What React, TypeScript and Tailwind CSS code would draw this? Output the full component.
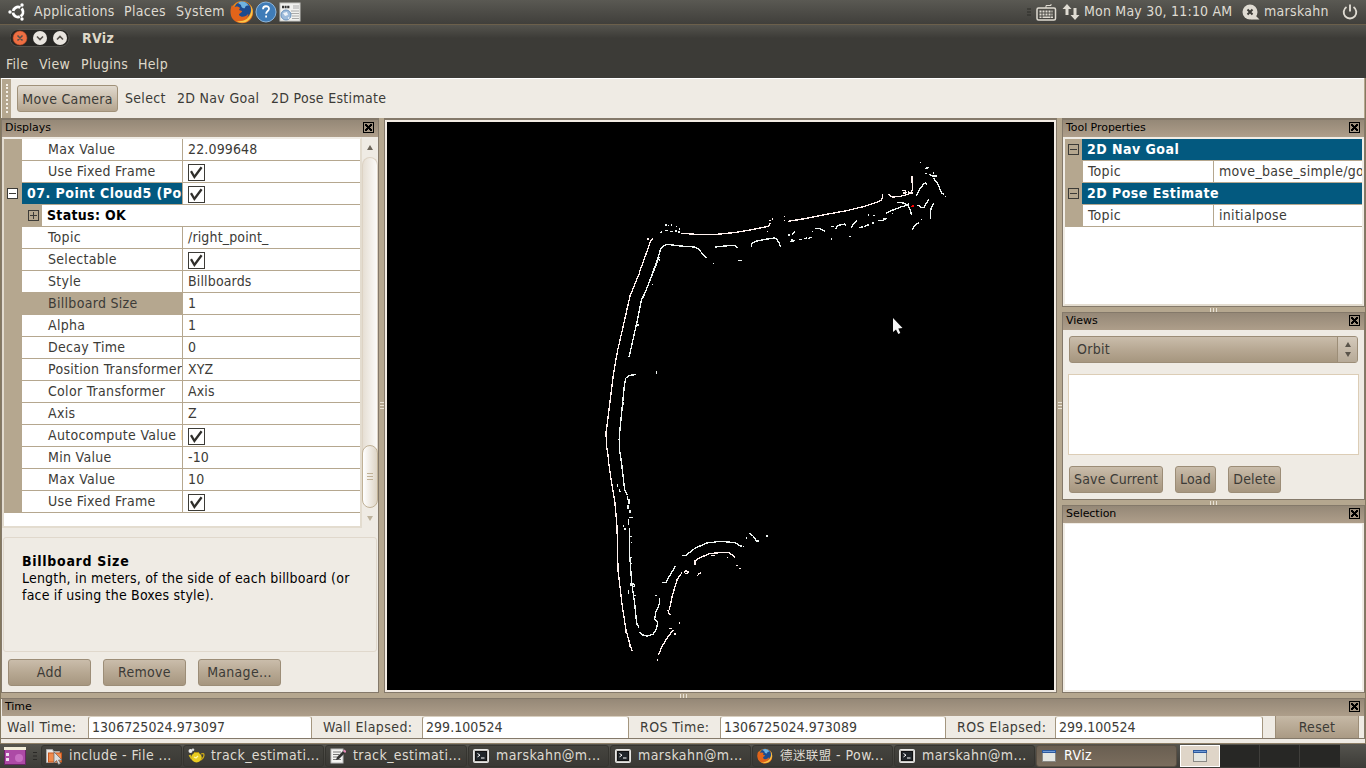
import type { ReactNode } from "react";

const BTN =
  "flex items-center justify-center rounded-[3px] border border-[#9c8d77] bg-linear-to-b from-[#cabdab] via-[#b7a893] to-[#a6967f]";

function CloseBox() {
  return (
    <svg className="mb-[2px]" width="11" height="11" viewBox="0 0 11 11" shapeRendering="crispEdges">
      <rect x="0.5" y="0.5" width="10" height="10" rx="1" fill="none" stroke="#000" />
      <path d="M2 2h2v1h1v1h1v-1h1v-1h2v2h-1v1h-1v1h1v1h1v2h-2v-1h-1v-1h-1v1h-1v1h-2v-2h1v-1h1v-1h-1v-1h-1z" fill="#000" />
    </svg>
  );
}

function DockTitle({ title, close = true }: { title: string; close?: boolean }) {
  return (
    <div className="flex h-[17px] shrink-0 items-center justify-between bg-linear-to-b from-[#958877] to-[#ae9e8a] pr-[4px] pl-[3px] font-['DejaVu_Sans',sans-serif] text-[11px] leading-[15px] tracking-[-0.05px] text-black">
      <span className="pb-[2px]">{title}</span>
      {close && <CloseBox />}
    </div>
  );
}

function Check() {
  return (
    <svg className="mt-px" width="17" height="17" viewBox="0 0 17 17">
      <rect x="0.5" y="0.5" width="16" height="16" fill="#fff" stroke="#3c3b37" shapeRendering="crispEdges" />
      <path d="M3 7.2l3.4 5.8L13.6 3.2" fill="none" stroke="#2f2e2b" strokeWidth="2.3" />
    </svg>
  );
}

function Expander({ open, white }: { open: boolean; white?: boolean }) {
  return (
    <svg className="mb-[2px]" width="11" height="11" viewBox="0 0 11 11" shapeRendering="crispEdges">
      <rect x="0.5" y="0.5" width="10" height="10" fill={white ? "#fff" : "none"} stroke="#3c3b37" />
      <path d={open ? "M2 5.5h7" : "M2 5.5h7M5.5 2v7"} stroke="#3c3b37" />
    </svg>
  );
}

function Splitter({ vertical = false, marks = true }: { vertical?: boolean; marks?: boolean }) {
  return (
    <div className={`flex shrink-0 items-center justify-center gap-[2px] ${vertical ? "w-[5px] flex-col" : "h-[5px] w-full"}`}>
      {marks &&
        [0, 1, 2].map((i) => (
          <span key={i} className={vertical ? "h-px w-[4px] bg-[#e9e2d6]" : "h-[4px] w-px bg-[#e9e2d6]"} />
        ))}
    </div>
  );
}

const rows: { name: string; value: string | true; selected?: boolean; kind?: "head" | "status" }[] = [
  { name: "Max Value", value: "22.099648" },
  { name: "Use Fixed Frame", value: true },
  { name: "07. Point Cloud5 (Po", value: true, kind: "head" },
  { name: "Status: OK", value: "", kind: "status" },
  { name: "Topic", value: "/right_point_" },
  { name: "Selectable", value: true },
  { name: "Style", value: "Billboards" },
  { name: "Billboard Size", value: "1", selected: true },
  { name: "Alpha", value: "1" },
  { name: "Decay Time", value: "0" },
  { name: "Position Transformer", value: "XYZ" },
  { name: "Color Transformer", value: "Axis" },
  { name: "Axis", value: "Z" },
  { name: "Autocompute Value B", value: true },
  { name: "Min Value", value: "-10" },
  { name: "Max Value", value: "10" },
  { name: "Use Fixed Frame", value: true },
];

function PropertyRow({ row }: { row: (typeof rows)[number] }) {
  if (row.kind === "status") {
    return (
      <div className="flex h-[22px] bg-[#b5a78f]">
        <div className="flex w-[38px] items-center justify-end pr-[3px]"><Expander open={false} /></div>
        <div className="flex-1 border-b border-[#b5a78f] bg-white pl-[5px] font-bold leading-[20px] tracking-[0.3px] text-black">{row.name}</div>
      </div>
    );
  }
  const nameStyle =
    row.kind === "head"
      ? "bg-[#03597f] pl-[5px] font-bold text-white tracking-[0.47px]"
      : row.selected
        ? "bg-[#b5a78f] pl-[26px]"
        : "bg-white pl-[26px]";
  return (
    <div className="flex h-[22px] bg-[#b5a78f]">
      <div className="flex w-[18px] items-center pl-[3px]">{row.kind === "head" && <Expander open white />}</div>
      <div className={`w-[160px] overflow-hidden border-b border-[#b5a78f] leading-[20px] whitespace-nowrap ${nameStyle}`}>{row.name}</div>
      <div className="flex-1 border-b border-l border-[#b5a78f] bg-white pl-[5px] leading-[20px] tracking-[0.15px]">
        {row.value === true ? <div className="pt-[2px]"><Check /></div> : row.value}
      </div>
    </div>
  );
}

function ToolHead({ name }: { name: string }) {
  return (
    <div className="flex h-[22px] bg-[#b5a78f]">
      <div className="flex w-[17px] items-center pl-[3px]"><Expander open /></div>
      <div className="flex-1 border-b border-[#b5a78f] bg-[#03597f] pl-[5px] font-bold leading-[20px] tracking-[0.47px] text-white">{name}</div>
    </div>
  );
}

function ToolRow({ value }: { value: string }) {
  return (
    <div className="flex h-[22px] bg-[#b5a78f]">
      <div className="w-[18px] shrink-0" />
      <div className="w-[130px] shrink-0 border-b border-[#b5a78f] bg-white pl-[5px] leading-[20px]">Topic</div>
      <div className="min-w-0 flex-1 overflow-hidden border-b border-l border-[#b5a78f] bg-white pl-[5px] leading-[20px] whitespace-nowrap">{value}</div>
    </div>
  );
}

function Firefox({ size }: { size: number }) {
  return (
    <svg width={size} height={size} viewBox="0 0 24 24">
      <circle cx="12" cy="12" r="11" fill="#e8861b" />
      <circle cx="12.5" cy="10" r="8.6" fill="#1d4b8e" />
      <path d="M8 3c4-3 9-1 11 3-2-1-4 0-4 2-2 1-4-1-4-3z" fill="#6fb3e0" />
      <path d="M2 5c0 0 1 2 3 2 2-1 4 0 5 1l-1 2 3 1c0 2-3 2-3 4 2 3 7 2 9-1 1 0 0 3-2 4 5-1 6-5 5-11 3 5 2 10-1 13-5 5-14 4-18-2-2-4-2-9 0-13z" fill="#e2641a" />
      <path d="M20.500 5c4 6 2 13-3 16-3 2-8 2-11 0 7 1 12-2 14-7 1-3 1-6 0-9z" fill="#f8c84a" />
    </svg>
  );
}

function Terminal() {
  return (
    <svg width="16" height="16" viewBox="0 0 16 16">
      <rect x="0.5" y="1.500" width="15" height="13" rx="1" fill="#c9c9c5" stroke="#e6e6e4" />
      <rect x="2.500" y="3.500" width="11" height="9" fill="#20262a" stroke="#111" />
      <path d="M4.500 5.500l2.500 1.700-2.500 1.700M8 10h3.500" fill="none" stroke="#fff" />
    </svg>
  );
}

function WindowIcon() {
  return (
    <svg width="14" height="12" viewBox="0 0 14 12">
      <rect x="0.5" y="0.5" width="13" height="11" fill="#e4e6e2" stroke="#8a8a86" />
      <rect width="14" height="3" fill="#2d5a9e" />
      <rect x="1" y="1" width="12" height="1" fill="#6f9bd6" />
    </svg>
  );
}

function FolderIcon() {
  return (
    <svg width="17" height="17" viewBox="0 0 17 17">
      <path d="M0.500 1.500h6l1 2h6v11H.5z" fill="#e8e6e3" stroke="#aaa" />
      <rect x="2.500" y="5" width="13" height="9" fill="#f08a4b" stroke="#c8571f" />
      <path d="M8 4v11l2.500-2.500 2 4 2-1-2-3.500h3.500z" fill="#ddd" stroke="#666" strokeWidth="0.7" />
    </svg>
  );
}

function TeapotIcon() {
  return (
    <svg width="17" height="16" viewBox="0 0 17 16">
      <ellipse cx="8.500" cy="9.500" rx="5.200" ry="5" fill="#e9cc21" />
      <path d="M13 6c4-2 4 3 0 6" fill="none" stroke="#c9a717" strokeWidth="1.300" />
      <path d="M4 11L1.500 7" stroke="#d9bc1e" strokeWidth="2" />
      <path d="M6 4.500h5" stroke="#b08f10" />
      <circle cx="2.500" cy="3" r="2" fill="#eee" />
      <circle cx="5" cy="1.800" r="1.300" fill="#ddd" />
      <path d="M6 9l2 1 2-2" fill="none" stroke="#fff6a8" strokeWidth="1.300" />
    </svg>
  );
}

function EditorIcon() {
  return (
    <svg width="16" height="16" viewBox="0 0 16 16">
      <rect x="1" y="1" width="12" height="14" fill="#f4f4f2" stroke="#bbb" />
      <path d="M3 4h8M3 6.500h6M3 9h4M3 11.500h8" stroke="#777" />
      <path d="M6 12l1-3 6-6 2 2-6 6z" fill="#333" />
      <path d="M13 3l1.500-1.500 2 2L15 5z" fill="#e58ab8" />
    </svg>
  );
}

function Task({ icon, children, active, width = "w-[141px]" }: { icon: ReactNode; children: ReactNode; active?: boolean; width?: string }) {
  return (
    <div
      className={`flex h-[22px] shrink-0 items-center rounded-[3px] border pl-[4px] whitespace-nowrap ${width} ${
        active ? "border-[#5a5044] bg-linear-to-b from-[#6a5f52] to-[#7a6d5d] text-white" : "border-[#35342f] bg-linear-to-b from-[#45443f] to-[#3a3935]"
      }`}
    >
      <span className="flex w-[23px] shrink-0 items-center">{icon}</span>
      <span className="pb-[2px] leading-[16px] tracking-[0.42px]">{children}</span>
    </div>
  );
}

function PointCloud() {
  return (
    <svg width="667" height="568" viewBox="387 122 667 568" className="block bg-black" shapeRendering="crispEdges">
      <g fill="none" stroke="#eef4f2" strokeWidth="4">
        <g transform="translate(640 150) scale(.33333)">
          <path d="M-1 364L9 338 32 272 40 265M24 265v5" stroke="#fff1ee" />
          <path d="M-1 474L6 446 18 422 52 330 62 297 72 286 84 283 110 287 164 291 175 297 190 314 200 323" />
          <path d="M60 248l6-2M76 242h8M90 244h10M106 243h6M114 246h5M76 225h6M85 229v-4M94 223v5M110 227v4M118 234v6" />
          <path d="M122 250L170 253 230 253 290 247 340 238 372 232 388 227 391 219M390 209v3M397 205v4M380 244h3M433 198v4M433 209v4M445 214L500 205 560 193 620 182 670 170 710 157 724 150 728 143V132" stroke="#fff1ee" />
          <path d="M226 291L255 288 286 286 293 295M295 332h10M220 340h2M334 290L336 281 345 274 370 269 402 264 410 268 417 278 422 292" />
          <path d="M445 255h4M457 254l8-9M450 275l14-3M453 270h5M478 268h9M491 266l10-2M503 266l14-5M517 244h3M526 236h15l14 8M573 229h9M586 238l6-11 22-5 5 5M574 265v4M628 260h5M635 233l5-12 12-10M658 233l12-3M674 231l6-5M681 225h7M697 219h6M686 193v4M699 196h6M715 211h10M726 212l14-7M729 206h10M738 190l13-7M757 190h3M745 185l20-7 20-8 16-4 5-6" />
          <path d="M748 134l8 7 20-1 20-5 18-6 3-11-1-40M745 134h3M786 122h10l4 8M788 129h10M805 126l14 4" stroke="#fff1ee" />
          <path d="M829 137l12-22 10-13 6-3 5 4M840 37h3M856 55l10-2M856 70h5M868 73l9 5M875 78h16M881 67v5M880 84l14 18 10 26 8 6M916 139h3" />
          <path d="M830 166h8l3 6h12l6-12 7-12M770 157l20 2 15 8 7 15 2 14M816 239l10-15 12-7M843 208h3M882 161l-8 10-3 20v15" />
          <path d="M815 168h6M817 172v-5" stroke="#f00" strokeWidth="5" />
        </g>
        <g transform="translate(590 220) scale(.33333)">
          <path d="M150 155L120 228 105 295 82 395 70 465 60 545 50 625 50 680 56 720M175 54v5M48 632v20" stroke="#fff1ee" />
          <path d="M208 110L162 226 154 240 140 310 117 412M142 315h6M206 120h5M186 193h4M137 464l-20 2-10 9-4 22-6 60-8 80-1 50 8 50M199 454v8M99 545v10M85 658h4" />
        </g>
        <g transform="translate(590 460) scale(.33333)">
          <path d="M55 0L62 50 75 130 81 200 84 330 97 440 108 510 116 540 126 573M106 507v12M119 545v15" stroke="#fff1ee" />
          <path d="M93 0L99 45 104 90 112 104M82 72v10M87 88l5 9M113 107v14M117 118v14M114 135v12M120 150v10M116 172h12M116 178v16M101 196v4M101 207h7M118 204V270L123 340 126 375 134 430 140 492 147 502M123 228v4M125 245v4M125 290v4M124 308v3M121 368v9M128 370l7 8M126 380h10M128 384v6M115 390v12M135 405v4M137 490h6" />
          <path d="M148 516l10 9 14 3 18-6 10-16 3-20-9-8 3-20 12-28v-17M196 407h4M217 367h12l8-16 20-34M275 287h11l30-23 35-15 40-5 45 4 12 9 7 1M458 259h3M470 230v6M478 220l11 8 11 15M497 243h10M531 225v5" />
          <path d="M315 316v-14l18-10 25-11 30-3h28l12 8 8 9M362 286h14M410 292h5M439 316h6M448 325h4M322 348l5-7 7-3M281 338l7-6 8 4-4 5h-8M276 338l-14 19-15 50-9 42M232 452h5M236 450v10l6 6M268 486v6M238 506h8M251 509l-18 22-18 30-10 25M202 597v5M255 520v4" stroke="#fff1ee" />
        </g>
      </g>
      <path d="M893 318v14l3-2.500 2.300 4.500 2-1-2-4.500 4.200-.5z" fill="#f4f4f4" shapeRendering="auto" />
    </svg>
  );
}

function TimeField({ label, value, labelW, fieldW }: { label: string; value: string; labelW: string; fieldW: string }) {
  return (
    <>
      <div className={`shrink-0 leading-[22px] tracking-[0.42px] whitespace-nowrap ${labelW}`}>{label}</div>
      <div className={`h-[22px] shrink-0 rounded-t-[3px] border-x border-t border-x-[#a4967f] border-t-[#d8cfc0] bg-white pl-[3px] leading-[20px] tracking-[0.05px] ${fieldW}`}>{value}</div>
    </>
  );
}

export default function App() {
  return (
    <div className="flex h-[768px] w-[1366px] flex-col overflow-hidden bg-[#3c3b37] font-['DejaVu_Sans_Condensed','DejaVu_Sans',sans-serif] text-[14px] tracking-[0.3px] text-[#3c3b37]">
      {/* desktop panel */}
      <div className="flex h-[24px] shrink-0 items-center bg-linear-to-b from-[#5a5953] to-[#403f3b] text-[#dfdbd2]">
        <svg className="ml-[8px]" width="18" height="18" viewBox="0 0 18 18">
          <circle cx="10" cy="9" r="5" fill="none" stroke="#fff" strokeWidth="2.800" strokeDasharray="8.970 1.500" strokeDashoffset="-0.750" transform="rotate(60 10 9)" />
          <circle cx="2" cy="9" r="1.700" fill="#fff" />
          <circle cx="14" cy="2" r="1.700" fill="#fff" />
          <circle cx="14" cy="16" r="1.700" fill="#fff" />
        </svg>
        <span className="ml-[8px] w-[90px] pb-px">Applications</span>
        <span className="w-[52px] pb-px">Places</span>
        <span className="w-[54px] pb-px">System</span>
        <Firefox size={24} />
        <svg className="ml-px" width="22" height="22" viewBox="0 0 22 22">
          <circle cx="11" cy="11" r="10" fill="#3f7cb8" stroke="#8db6dc" />
          <path d="M8 8.300c0-4 6-4 6-.5 0 2.200-2.900 2.300-2.900 5M11.100 14.500v2" fill="none" stroke="#fff" strokeWidth="1.800" />
        </svg>
        <svg className="ml-[2px]" width="22" height="20" viewBox="0 0 22 20">
          <rect x="1" y="1" width="20" height="18" fill="#f1f1ef" stroke="#c8c8c4" />
          <path d="M3 5h8" stroke="#333" strokeWidth="2.500" strokeDasharray="2 .6" />
          <path d="M14 4h6M14 6h6M12 9h8M12 11.500h8M13 14h7M13 16.500h7" stroke="#aaa" />
          <circle cx="7" cy="13" r="5" fill="#9dbbdb" stroke="#6b93be" />
          <path d="M4 11l4-1 1 3-3 1zM9 15l2 1-2 1z" fill="#eef3f8" />
        </svg>
        <div className="ml-auto flex items-center">
          <svg className="mr-[5px]" width="4" height="8" viewBox="0 0 4 8"><path d="M0 1h4M0 4h4M0 7h4" stroke="#2d2c29" /></svg>
          <svg width="21" height="17" viewBox="0 0 21 17">
            <rect x="1" y="4" width="18.500" height="12" rx="1.500" fill="none" stroke="#dfdbd2" strokeWidth="1.500" />
            <path d="M10 4V1.500h5V0" fill="none" stroke="#dfdbd2" />
            <path d="M3.500 7.500h13M3.500 10.500h13" stroke="#dfdbd2" strokeWidth="1.800" strokeDasharray="2 1" />
            <path d="M3.500 13.300h2M6.500 13.300h8M15 13.300h2" stroke="#dfdbd2" strokeWidth="1.500" />
          </svg>
          <svg className="ml-[5px]" width="18" height="18" viewBox="0 0 18 18">
            <path d="M5 1L0.500 6H3.500V12H6.500V6H9.500zM13 17L8.500 12H11.500V5H14.500V12H17.500z" fill="#dfdbd2" />
          </svg>
          <span className="ml-[4px] w-[158px] pb-px tracking-[0.2px] whitespace-nowrap">Mon May 30, 11:10 AM</span>
          <svg width="18" height="17" viewBox="0 0 18 17">
            <circle cx="8" cy="8" r="7.500" fill="#dfdbd2" /><path d="M13 11l4.500 4.500H9z" fill="#dfdbd2" />
            <path d="M5.500 5.500l5 5M10.500 5.500l-5 5" stroke="#3c3b37" strokeWidth="2" />
          </svg>
          <span className="ml-[4px] w-[78px] pb-px">marskahn</span>
          <svg className="mr-[8px]" width="16" height="16" viewBox="0 0 16 16">
            <path d="M4.500 3A6.300 6.300 0 1 0 11.500 3M8 0.500v7" fill="none" stroke="#dfdbd2" strokeWidth="1.900" />
          </svg>
        </div>
      </div>

      {/* window chrome */}
      <div className="flex h-[54px] shrink-0 flex-col border-t border-[#6b5f4b] bg-linear-to-b from-[#55544e] via-[#3c3b37] via-25% to-[#3c3b37] text-[#dfd8c8]">
        <div className="flex h-[26px] items-center pl-[10px]">
          <svg width="60" height="18" viewBox="0 0 60 18">
            <rect x="0" y="0.500" width="59" height="17" rx="8" fill="#282724" stroke="#54534e" />
            <circle cx="10" cy="9" r="7" fill="#ee6f43" stroke="#c04b25" strokeWidth=".5" />
            <circle cx="30" cy="9" r="7" fill="#e9e5df" />
            <circle cx="50" cy="9" r="7" fill="#e9e5df" />
            <path d="M7.500 6.500l5 5M12.500 6.500l-5 5M27 7.500l3 3 3-3M47 10.500l3-3 3 3" fill="none" stroke="#55504a" strokeWidth="1.600" />
          </svg>
          <span className="ml-[12px] font-bold">RViz</span>
        </div>
        <div className="flex h-[26px] items-center pl-[6px]">
          <span className="w-[33px]">File</span>
          <span className="w-[42px]">View</span>
          <span className="w-[57px]">Plugins</span>
          <span>Help</span>
        </div>
      </div>

      <div className="flex min-h-0 flex-1 flex-col border-x border-[#84785f] bg-[#b5a78f]">
        {/* toolbar */}
        <div className="mr-px flex h-[40px] shrink-0 border-t border-white bg-[#efebe4]">
          <div className="ml-px flex w-[9px] justify-center bg-[#b5a78f] py-[5px]"><div className="w-0 border-l-2 border-dotted border-[#f4efe6]" /></div>
          <div className="mt-[6px] ml-[6px] flex h-[27px] w-[101px] items-center justify-center rounded-[3px] border border-[#a09179] bg-linear-to-b from-[#e0d9ce] via-[#cbbfae] to-[#b3a48e] pt-px">Move Camera</div>
          <span className="ml-[7px] w-[52px] leading-[38px]">Select</span>
          <span className="w-[94px] leading-[38px]">2D Nav Goal</span>
          <span className="leading-[38px]">2D Pose Estimate</span>
        </div>

        {/* docks */}
        <div className="flex h-[575px] shrink-0">
          <div className="flex w-[378px] shrink-0 flex-col border border-t-2 border-[#84796a] bg-[#efebe4]">
            <DockTitle title="Displays" />
            <div className="flex h-[391px]">
              <div className="w-[360px] shrink-0 border-2 border-[#e3dccf] border-t-[#f0ece5] bg-white">
                {rows.map((r, i) => <PropertyRow key={i} row={r} />)}
              </div>
              <div className="flex w-[16px] flex-col items-center">
                <svg className="mt-[8px] mb-[7px]" width="6" height="5" viewBox="0 0 6 5"><path d="M3 0l3 5H0z" fill="#6d665b" /></svg>
                <div className="h-[295px] w-[16px] rounded-t-[8px] border border-b-0 border-[#ddd3c4] bg-linear-to-r from-[#e6dfd4] to-[#fbfaf8]" />
                <div className="-mt-[7px] flex h-[63px] w-[16px] flex-col items-center justify-center gap-[2px] rounded-[8px] border border-[#c0b196] bg-linear-to-r from-white to-[#ded5c6]">
                  {[0, 1, 2].map((i) => <span key={i} className="h-px w-[6px] bg-[#c0b196]" />)}
                </div>
                <svg className="mt-[8px]" width="6" height="5" viewBox="0 0 6 5"><path d="M3 5l3-5H0z" fill="#bdb29c" /></svg>
              </div>
            </div>
            <div className="mx-px mt-[9px] h-[115px] rounded-[3px] border border-[#e0d8cc] px-[18px] pt-[15px] leading-[17px] tracking-[0.2px] text-black">
              <p className="font-bold tracking-[0.7px]">Billboard Size</p>
              <p className="whitespace-nowrap">Length, in meters, of the side of each billboard (or<br />face if using the Boxes style).</p>
            </div>
            <div className="mt-[7px] flex gap-[12px] pl-[6px]">
              {["Add", "Remove", "Manage..."].map((b) => <div key={b} className={`h-[27px] w-[83px] ${BTN}`}>{b}</div>)}
            </div>
          </div>
          <Splitter vertical />
          <div className="w-[673px] shrink-0 border border-t-2 border-[#84796a] bg-[#f3ece4]">
            <div className="p-[2px]"><PointCloud /></div>
          </div>
          <Splitter vertical />
          <div className="flex w-[303px] shrink-0 flex-col">
            <div className="h-[189px] border border-t-2 border-[#84796a] bg-[#efebe4]">
              <DockTitle title="Tool Properties" />
              <div className="h-[169px] border-2 border-[#f0ece5] border-b-[#e3dccf] bg-white">
                <ToolHead name="2D Nav Goal" />
                <ToolRow value="move_base_simple/go" />
                <ToolHead name="2D Pose Estimate" />
                <ToolRow value="initialpose" />
              </div>
            </div>
            <Splitter />
            <div className="h-[188px] border border-[#84796a] bg-[#efebe4]">
              <DockTitle title="Views" />
              <div className="mx-[6px] mt-[6px] flex h-[27px] rounded-[3px] border border-[#9c8d77] bg-linear-to-b from-[#cabdab] via-[#b7a893] to-[#a6967f]">
                <span className="flex-1 pl-[7px] leading-[24px]">Orbit</span>
                <span className="flex w-[20px] flex-col items-center justify-center gap-[5px] border-l border-[#9c8d77] bg-white/20">
                  <svg width="6" height="5" viewBox="0 0 6 5"><path d="M3 0l3 5H0z" fill="#5a544a" /></svg>
                  <svg width="6" height="5" viewBox="0 0 6 5"><path d="M3 5l3-5H0z" fill="#5a544a" /></svg>
                </span>
              </div>
              <div className="mx-[5px] mt-[11px] h-[81px] border border-[#dccdb6] bg-white" />
              <div className="mt-[11px] flex gap-[12px] pl-[6px] tracking-[0.15px]">
                <div className={`h-[27px] w-[94px] ${BTN}`}>Save Current</div>
                <div className={`h-[27px] w-[41px] ${BTN}`}>Load</div>
                <div className={`h-[27px] w-[53px] ${BTN}`}>Delete</div>
              </div>
            </div>
            <Splitter />
            <div className="h-[188px] border border-[#84796a] bg-[#efebe4]">
              <DockTitle title="Selection" />
              <div className="h-[169px] border-2 border-t-1 border-[#f0ece5] bg-white" />
            </div>
          </div>
        </div>
        <Splitter />

        {/* time dock */}
        <div className="flex h-[41px] shrink-0 flex-col border border-l-0 border-[#84796a] bg-[#efebe4] pl-px">
          <DockTitle title="Time" />
          <div className="flex h-[22px] pl-[5px]">
            <TimeField label="Wall Time:" value="1306725024.973097" labelW="w-[81px]" fieldW="w-[224px]" />
            <TimeField label="Wall Elapsed:" value="299.100524" labelW="w-[110px] pl-[11px]" fieldW="w-[207px]" />
            <TimeField label="ROS Time:" value="1306725024.973089" labelW="w-[91px] pl-[11px]" fieldW="w-[226px]" />
            <TimeField label="ROS Elapsed:" value="299.100524" labelW="w-[109px] pl-[11px]" fieldW="w-[208px]" />
            <div className="ml-[12px] flex h-[22px] w-[84px] items-center justify-center border-x border-[#9c8d77] bg-linear-to-b from-[#c6b9a6] to-[#aa9a84]">Reset</div>
          </div>
        </div>
        <div className="h-[5px] shrink-0 border-b border-[#8f8068] bg-[#efebe4]" />
      </div>

      {/* task bar */}
      <div className="flex h-[24px] shrink-0 items-center gap-px bg-linear-to-b from-[#55544e] to-[#3c3b37] text-[#dfdbd2]">
        <div className="flex w-[40px] shrink-0 items-center pl-[4px]">
          <svg width="22" height="18" viewBox="0 0 22 18">
            <rect x=".5" y=".5" width="21" height="17" fill="#ad4aa6" stroke="#6b2467" />
            <rect width="22" height="3" fill="#f1ecd9" /><path d="M2 6h3v3H2zM2 11h3v3H2z" fill="#efdff0" />
            <circle cx="15" cy="11" r="4" fill="#c86fc2" />
          </svg>
          <svg className="ml-[7px]" width="4" height="8" viewBox="0 0 4 8"><path d="M0 .5h4M0 4h4M0 7.500h4" stroke="#2a2926" /></svg>
        </div>
        <Task icon={<FolderIcon />}>include - File ...</Task>
        <Task icon={<TeapotIcon />}>track_estimati...</Task>
        <Task icon={<EditorIcon />} width="w-[142px]">track_estimati...</Task>
        <Task icon={<Terminal />}>marskahn@m...</Task>
        <Task icon={<Terminal />}>marskahn@m...</Task>
        <Task icon={<Firefox size={16} />}><span className="font-['DejaVu_Sans_Condensed','DejaVu_Sans','Noto_Sans_CJK_SC',sans-serif]"><span className="text-[12.5px]">德迷联盟</span> - Pow...</span></Task>
        <Task icon={<Terminal />}>marskahn@m...</Task>
        <Task icon={<span className="pl-px"><WindowIcon /></span>} active>RViz</Task>
        <div className="ml-[2px] flex h-[22px] w-[160px] shrink-0 bg-[#272725]">
          <div className="flex w-[40px] items-center justify-center border border-white bg-[#dfd5c8]"><WindowIcon /></div>
          <div className="w-[40px] border-r border-[#3f3e3b]" />
          <div className="w-[40px] border-r border-[#3f3e3b]" />
        </div>
      </div>
    </div>
  );
}
